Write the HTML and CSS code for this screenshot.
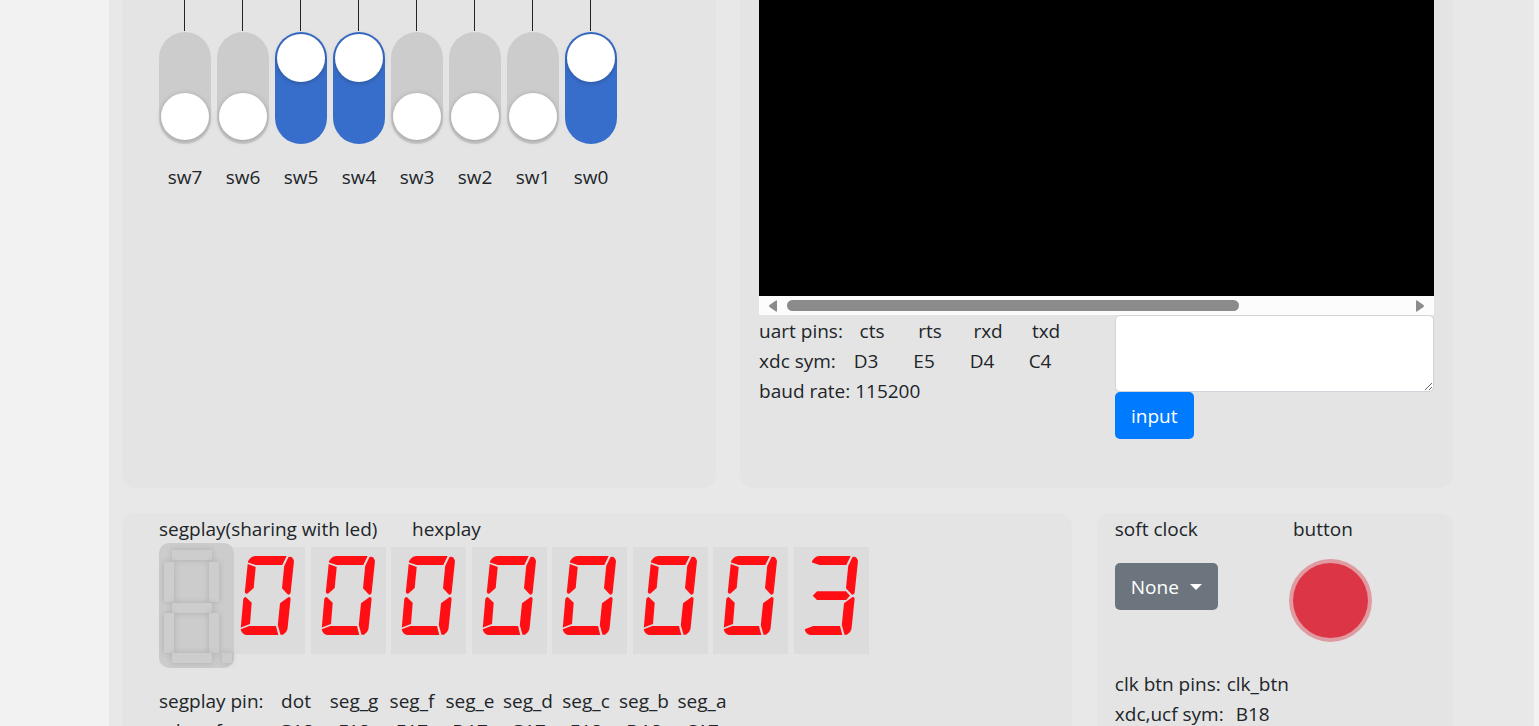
FILE: index.html
```html
<!DOCTYPE html>
<html lang="en">
<head>
<meta charset="utf-8">
<title>FPGA board panel</title>
<link rel="stylesheet" href="styles.css">
</head>
<body>
<main class="board">
  <div class="row row-top">
    <section class="card card-switches">
      <div class="switches">
        <label class="switch"><span class="wire"></span><input type="checkbox" class="toggle">sw7</label>
        <label class="switch"><span class="wire"></span><input type="checkbox" class="toggle">sw6</label>
        <label class="switch"><span class="wire"></span><input type="checkbox" class="toggle" checked>sw5</label>
        <label class="switch"><span class="wire"></span><input type="checkbox" class="toggle" checked>sw4</label>
        <label class="switch"><span class="wire"></span><input type="checkbox" class="toggle">sw3</label>
        <label class="switch"><span class="wire"></span><input type="checkbox" class="toggle">sw2</label>
        <label class="switch"><span class="wire"></span><input type="checkbox" class="toggle">sw1</label>
        <label class="switch"><span class="wire"></span><input type="checkbox" class="toggle" checked>sw0</label>
      </div>
    </section>
    <section class="card card-uart">
      <div class="terminal"></div>
      <div class="scrollbar">
        <svg class="arrow" viewBox="0 0 10 12"><path d="M9 1v10q0 1-1 .5L1.500 7q-1-1 0-2L8 .5q1-.5 1 .5z"/></svg>
        <div class="track"><div class="thumb"></div></div>
        <svg class="arrow" viewBox="0 0 10 12"><path d="M1 1v10q0 1 1 .5L8.500 7q1-1 0-2L2 .5Q1 0 1 1z"/></svg>
      </div>
      <div class="uart">
        <div class="uart-info">
          <table class="pins uart-pins">
            <tr><th>uart pins:</th><td>cts</td><td>rts</td><td>rxd</td><td>txd</td></tr>
            <tr class="symbols"><th>xdc sym:</th><td>D3</td><td>E5</td><td>D4</td><td>C4</td></tr>
          </table>
          <div>baud rate: 115200</div>
        </div>
        <div class="uart-send">
          <textarea class="message" aria-label="uart input"></textarea>
          <button class="btn btn-primary" type="button">input</button>
        </div>
      </div>
    </section>
  </div>
  <div class="row">
    <section class="card card-display">
      <div class="titles"><span class="title-seg">segplay(sharing with led)</span><span>hexplay</span></div>
      <div class="displays">
        <div class="segplay">
          <svg viewBox="0 0 75 125">
            <g class="unlit">
              <rect x="13" y="7" width="40" height="10" rx="1"/><rect x="5" y="19" width="10" height="40" rx="1"/>
              <rect x="50" y="19" width="10" height="40" rx="1"/><rect x="13" y="60" width="40" height="10" rx="1"/>
              <rect x="5" y="70" width="10" height="40" rx="1"/><rect x="50" y="70" width="10" height="40" rx="1"/>
              <rect x="13" y="110" width="40" height="10" rx="1"/><rect x="63" y="110" width="10" height="10" rx="1"/>
            </g>
          </svg>
        </div>
        <div class="hexplay">
          <svg class="digit" viewBox="0 0 75 107">
            <defs>
              <g id="right-side">
                <path d="M18 15.5Q17.5 14 20 11.5Q22 9.2 25 9H56.7L52.3 18H25.7z"/>
                <path d="M58.5 10Q62.5 8.5 64 14L60.6 46Q59 49 57.3 47L52 41.3L54.2 19z"/>
                <path d="M58.2 50.3Q60.5 49.5 60.6 52L57.5 82Q57 85 53 87.7H50.5L47.8 78L50 56.3z"/>
                <path d="M10.7 82.3L19.3 79H46L48.3 88H16Q11.5 87 10.7 82.3z"/>
              </g>
              <g id="zero">
                <use href="#right-side"/>
                <path d="M17.7 17L25.7 20L23.7 41L17.5 46.5Q15.5 47.5 14.8 45z"/>
                <path d="M15.7 50L21.7 55.7L20 77L10.8 80.5L13.3 52Q14 50 15.7 50z"/>
              </g>
            </defs>
            <use href="#zero"/>
          </svg>
          <svg class="digit" viewBox="0 0 75 107"><use href="#zero"/></svg>
          <svg class="digit" viewBox="0 0 75 107"><use href="#zero"/></svg>
          <svg class="digit" viewBox="0 0 75 107"><use href="#zero"/></svg>
          <svg class="digit" viewBox="0 0 75 107"><use href="#zero"/></svg>
          <svg class="digit" viewBox="0 0 75 107"><use href="#zero"/></svg>
          <svg class="digit" viewBox="0 0 75 107"><use href="#zero"/></svg>
          <svg class="digit" viewBox="0 0 75 107"><use href="#right-side"/><path d="M18.7 48.7L23 44.3H52L56 48.7L52 53H23z"/></svg>
        </div>
      </div>
      <table class="pins seg-pins">
        <tr><th>segplay pin:</th><td>dot</td><td>seg_g</td><td>seg_f</td><td>seg_e</td><td>seg_d</td><td>seg_c</td><td>seg_b</td><td>seg_a</td></tr>
        <tr><th>xdc,ucf sym:</th><td>G18</td><td>F18</td><td>E17</td><td>D17</td><td>G17</td><td>E18</td><td>D18</td><td>C17</td></tr>
      </table>
    </section>
    <section class="card card-clock">
      <div class="clock-controls">
        <div>
          <div>soft clock</div>
          <button class="btn btn-secondary" type="button">None<span class="caret"></span></button>
        </div>
        <div>
          <div>button</div>
          <button class="push" type="button" aria-label="clock button"></button>
        </div>
      </div>
      <table class="pins clock-pins">
        <tr><th>clk btn pins:</th><td>clk_btn</td></tr>
        <tr><th>xdc,ucf sym:</th><td class="indent">B18</td></tr>
      </table>
    </section>
  </div>
</main>
</body>
</html>
```
FILE: styles.css
```css
* { box-sizing: border-box; }
html, body { height: 100%; }
body {
  margin: 0;
  overflow: hidden;
  background: #f2f2f2;
  color: #212529;
  font-family: "Open Sans", "Noto Sans", sans-serif;
  font-size: 19px;
  line-height: 30px;
}
.board {
  min-height: 100%;
  margin-left: 109px;
  margin-right: 5px;
  padding-left: 13px;
  padding-right: 81px;
  background: #e8e8e8;
}
.row { display: grid; gap: 25px; margin-bottom: 25px; grid-template-columns: 8fr 3fr; }
.row-top { gap: 24px; grid-template-columns: 5fr 6fr; }
.card { border-radius: 14px; background: #e4e4e4; min-width: 0; }
.row-top .card { border-radius: 0 0 14px 14px; }

.card-switches { padding-left: 37px; }
.switches { display: flex; gap: 6px; }
.switch { width: 52px; display: flex; flex-direction: column; align-items: center; }
.wire { width: 1px; height: 31px; margin-right: 2px; background: #212529; }
.toggle {
  appearance: none;
  width: 52px;
  height: 112px;
  margin: 1px 0 18px;
  padding: 2px;
  border-radius: 26px;
  background: #ccc;
  display: flex;
  align-items: flex-end;
  justify-content: center;
}
.toggle::before {
  content: "";
  width: 48px;
  height: 47px;
  margin-bottom: 2px;
  border-radius: 50%;
  background: #fff;
  box-shadow: 0 1px 5px rgba(0, 0, 0, .25);
}
.toggle:checked { background: #386ecb; align-items: flex-start; }
.toggle:checked::before { height: 48px; }

.card-uart { padding: 0 19px 49px; }
.terminal { height: 296px; background: #000; }
.scrollbar { height: 19px; padding: 0 9px; display: flex; align-items: center; gap: 9px; background: #fcfcfc; }
.arrow { width: 10px; height: 12px; fill: #8b8b8b; flex: none; }
.track { flex: 1; }
.thumb { width: 73%; height: 11px; border-radius: 6px; background: #8b8b8b; }
.uart { display: grid; grid-template-columns: 356fr 319fr; }
.uart-info { padding-top: 1px; }
.message {
  display: block;
  width: 100%;
  height: 77px;
  border: 1px solid #ced4da;
  border-radius: 5px;
  background: #fff;
  padding: 8px 15px;
  font: inherit;
}
.btn {
  height: 47px;
  padding: 0 16px;
  border: 0;
  border-radius: 5px;
  color: #fff;
  font: inherit;
  display: flex;
  align-items: center;
}
.btn-primary { background: #007bff; }
.btn-secondary { background: #6c757d; margin-top: 19px; }
.caret { margin-left: 11px; border: 6px solid transparent; border-top-color: #fff; border-bottom: 0; }

.pins { border-collapse: collapse; table-layout: fixed; }
.pins th { padding: 0; font-weight: 400; text-align: left; white-space: nowrap; }
.pins td { padding: 0; width: 58px; text-align: center; }
.uart-pins th { width: 84px; }
.uart-pins { width: 316px; }
.uart-pins .symbols td { padding-right: 12px; }

.card-display { padding: 1px 37px 30px; }
.titles { display: flex; }
.title-seg { width: 253px; }
.displays { display: flex; height: 125px; margin-top: -1px; }
.segplay {
  position: relative;
  width: 75px;
  height: 125px;
  border-radius: 10px;
  background: #ccc;
}
.segplay svg { display: block; overflow: visible; }
.unlit rect { fill: #cdcdcd; filter: drop-shadow(0 0 3px rgba(0, 0, 0, .15)); }
.hexplay { display: flex; justify-content: space-between; width: 639px; margin-left: -4px; padding-top: 4px; }
.digit { width: 75px; height: 107px; background: #dcdcdc; fill: #ff0f14; }
.seg-pins { width: 572px; margin-top: 18px; }
.seg-pins th { width: 108px; }

.card-clock { padding: 1px 18px 30px; }
.clock-controls { display: grid; grid-template-columns: 1fr 1fr; gap: 36px; height: 155px; }
.push {
  display: block;
  width: 75px;
  height: 75px;
  margin-top: 19px;
  border: 0;
  border-radius: 50%;
  background: #dc3545;
  box-shadow: 0 0 0 4px rgba(220, 53, 69, .42);
}
.clock-pins td { text-align: left; padding-left: 3px; width: auto; }
.clock-pins .indent { padding-left: 12px; }
```
